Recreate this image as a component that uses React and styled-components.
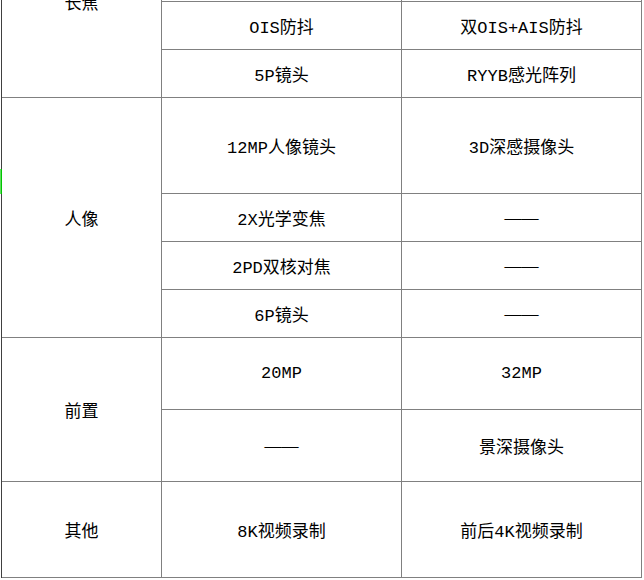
import React from 'react';
import styled, { createGlobalStyle } from 'styled-components';

const GlobalStyle = createGlobalStyle`
  html, body {
    margin: 0;
    padding: 0;
    background: #ffffff;
  }
  body {
    font-family: "Liberation Mono", "Noto Sans CJK SC", monospace;
    font-size: 17px;
    color: #000000;
  }
`;

// the page is scrolled so the first two rows of 长焦 sit above the fold
const Viewport = styled.div`
  position: relative;
  height: 580px;
  overflow: hidden;
  padding-left: 1px;
`;

const SpecGrid = styled.div`
  display: grid;
  grid-template-columns: 160px 240px 240px;
  grid-template-rows: ${(p) => p.$rows};
  width: max-content;
  margin-top: -95px;
  border-top: 1px solid #808080;
  border-left: 1px solid #404040;
`;

const Cell = styled.div`
  box-sizing: border-box;
  display: flex;
  align-items: center;
  justify-content: center;
  padding-top: 0;
  grid-row: span ${(p) => p.$span || 1};
  border-right: 1px solid #808080;
  border-bottom: 1px solid #808080;
  white-space: nowrap;
`;

const Dash = styled.span`
  font-family: "Liberation Serif", serif;
  font-size: 17px;
`;

const Marker = styled.div`
  position: absolute;
  left: 0;
  top: 169px;
  width: 2px;
  height: 25px;
  background: #00c400;
  border-left: 1px solid #5fe05f;
  box-sizing: border-box;
`;

// rows above the fold are scrolled out of view
const sections = [
  {
    label: '长焦',
    rows: [
      ['', '', 48],
      ['', '', 48],
      ['OIS防抖', '双OIS+AIS防抖', 48],
      ['5P镜头', 'RYYB感光阵列', 48],
    ],
  },
  {
    label: '人像',
    rows: [
      ['12MP人像镜头', '3D深感摄像头', 96],
      ['2X光学变焦', '——', 48],
      ['2PD双核对焦', '——', 48],
      ['6P镜头', '——', 48],
    ],
  },
  {
    label: '前置',
    rows: [
      ['20MP', '32MP', 72],
      ['——', '景深摄像头', 72],
    ],
  },
  {
    label: '其他',
    rows: [['8K视频录制', '前后4K视频录制', 96]],
  },
];

const rowTemplate = sections
  .flatMap((s) => s.rows.map((r) => `${r[2]}px`))
  .join(' ');

const Value = ({ text }) =>
  text === '——' ? <Dash>{text}</Dash> : <>{text}</>;

export default function App() {
  return (
    <>
      <GlobalStyle />
      <Viewport>
        <SpecGrid $rows={rowTemplate}>
          {sections.map((section) => (
            <React.Fragment key={section.label}>
              <Cell $span={section.rows.length}>{section.label}</Cell>
              {section.rows.map((row, i) => (
                <React.Fragment key={i}>
                  <Cell>
                    <Value text={row[0]} />
                  </Cell>
                  <Cell>
                    <Value text={row[1]} />
                  </Cell>
                </React.Fragment>
              ))}
            </React.Fragment>
          ))}
        </SpecGrid>
        <Marker />
      </Viewport>
    </>
  );
}
